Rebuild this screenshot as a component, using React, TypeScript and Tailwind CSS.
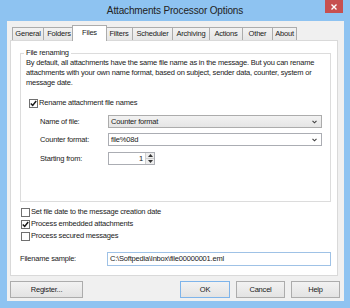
import type { ReactNode } from 'react';

const font = "font-['Liberation_Sans',Arial,sans-serif]";

const tabs = [
  { label: 'General', w: 'w-[31px]' },
  { label: 'Folders', w: 'w-[31px]' },
  { label: 'Files', w: 'w-[35px]', active: true },
  { label: 'Filters', w: 'w-[27px]' },
  { label: 'Scheduler', w: 'w-[40px]' },
  { label: 'Archiving', w: 'w-[37px]' },
  { label: 'Actions', w: 'w-[33px]' },
  { label: 'Other', w: 'w-[30px]' },
  { label: 'About', w: 'w-[25px]' },
];

function Check({ checked }: { checked?: boolean }) {
  return (
    <span className="flex h-[9px] w-[9px] shrink-0 items-center justify-center border border-[#707070] bg-white">
      {checked && (
        <svg width="7" height="7" viewBox="0 0 7 7">
          <path d="M0.8 3.4 L2.7 5.4 L6.2 1" stroke="#1a1a1a" strokeWidth="1.5" fill="none" />
        </svg>
      )}
    </span>
  );
}

function Chevron() {
  return (
    <svg width="5" height="4" viewBox="0 0 5 4" className="shrink-0">
      <path d="M0.5 0.8 L2.5 2.8 L4.5 0.8" stroke="#404040" strokeWidth="1.1" fill="none" />
    </svg>
  );
}

function CheckRow({ checked, children }: { checked?: boolean; children: ReactNode }) {
  return (
    <div className="flex h-[12px] items-center gap-[1px]">
      <Check checked={checked} />
      <span className="whitespace-nowrap">{children}</span>
    </div>
  );
}

function Button({ children, primary, w }: { children: ReactNode; primary?: boolean; w: string }) {
  return (
    <div
      className={`flex h-[17px] items-center justify-center border bg-gradient-to-b from-[#f2f2f2] to-[#e3e3e3] ${w} ${
        primary ? 'border-[#7eb4ea]' : 'border-[#acacac]'
      }`}
    >
      {children}
    </div>
  );
}

export default function App() {
  return (
    <div
      className={`flex h-[308px] w-[350px] flex-col bg-[#8ec3f1] text-[7.5px] leading-[10px] tracking-[-0.2px] text-[#1a1a1a] ${font}`}
    >
      {/* title bar */}
      <div className="relative flex h-[21px] shrink-0 items-center justify-center">
        <span className="text-[10px] tracking-[-0.15px] text-[#222]">Attachments Processor Options</span>
        <div className="absolute right-[7px] top-0 flex h-[13px] w-[18px] items-center justify-center bg-[#c75050]">
          <svg width="6" height="6" viewBox="0 0 6 6">
            <path d="M0.5 0.5 L5.5 5.5 M5.5 0.5 L0.5 5.5" stroke="#fff" strokeWidth="1.4" />
          </svg>
        </div>
      </div>

      {/* client area */}
      <div className="ml-[7px] flex h-[280px] w-[337px] flex-col bg-[#f0f0f0] pt-[4px]">
        <div className="ml-[3px] flex h-[15px] items-end pl-[2px]">
          {tabs.map((t) =>
            t.active ? (
              <div
                key={t.label}
                className={`relative z-10 -mx-[2px] -mb-px flex h-[16px] items-start justify-center border border-b-0 border-[#acacac] bg-white pt-[2px] ${t.w}`}
              >
                {t.label}
              </div>
            ) : (
              <div
                key={t.label}
                className={`flex h-[13px] items-center justify-center border border-r-0 border-b-0 border-[#acacac] bg-gradient-to-b from-[#f2f2f2] to-[#e6e6e6] last:border-r ${t.w}`}
              >
                {t.label}
              </div>
            )
          )}
        </div>

        <div className="ml-[3px] flex h-[236px] w-[328px] flex-col border border-[#d9d9d9] bg-white pt-[12px]">
          {/* group box */}
          <div className="relative ml-[9px] h-[149px] w-[311px] border border-[#dcdcdc] pt-[4px]">
            <span className="absolute -top-[6px] left-[3px] bg-white px-[2px]">File renaming</span>
            <div className="whitespace-nowrap pl-[5px]">
              By default, all attachments have the same file name as in the message. But you can rename
              <br />
              attachments with your own name format, based on subject, sender data, counter, system or
              <br />
              message date.
            </div>
            <div className="mt-[9px] pl-[8px]">
              <CheckRow checked>Rename attachment file names</CheckRow>
            </div>
            <div className="mt-[6px] flex items-center pl-[19px]">
              <span className="w-[68px]">Name of file:</span>
              <div className="flex h-[13px] w-[214px] items-center justify-between border border-[#acacac] bg-gradient-to-b from-[#f2f2f2] to-[#e5e5e5] pl-[2px] pr-[4px]">
                <span>Counter format</span>
                <Chevron />
              </div>
            </div>
            <div className="mt-[5px] flex items-center pl-[19px]">
              <span className="w-[68px]">Counter format:</span>
              <div className="flex h-[13px] w-[214px] items-center justify-between border border-[#abadb3] bg-white pl-[2px] pr-[4px]">
                <span>file%08d</span>
                <Chevron />
              </div>
            </div>
            <div className="mt-[6px] flex items-center pl-[19px]">
              <span className="w-[68px]">Starting from:</span>
              <div className="flex h-[13px] w-[47px] items-center border border-[#abadb3] bg-white">
                <span className="flex-1 pr-[2px] text-right">1</span>
                <div className="flex h-full w-[9px] flex-col border-l border-[#cfcfcf]">
                  <div className="flex flex-1 items-center justify-center bg-[#eeeeee]">
                    <svg width="5" height="3" viewBox="0 0 5 3">
                      <path d="M0 3 L2.5 0 L5 3 Z" fill="#333" />
                    </svg>
                  </div>
                  <div className="flex flex-1 items-center justify-center border-t border-[#cfcfcf] bg-[#eeeeee]">
                    <svg width="5" height="3" viewBox="0 0 5 3">
                      <path d="M0 0 L2.5 3 L5 0 Z" fill="#333" />
                    </svg>
                  </div>
                </div>
              </div>
            </div>
          </div>

          <div className="ml-[10px] mt-[4px] flex flex-col">
            <CheckRow>Set file date to the message creation date</CheckRow>
            <CheckRow checked>Process embedded attachments</CheckRow>
            <CheckRow>Process secured messages</CheckRow>
          </div>

          <div className="ml-[9px] mt-[10px] flex items-center">
            <span className="w-[87px]">Filename sample:</span>
            <div className="flex h-[14px] w-[224px] items-center border border-[#9fc2e6] bg-white pl-[2px]">
              C:\Softpedia\Inbox\file00000001.eml
            </div>
          </div>
        </div>

        <div className="mt-[5px] flex pl-[3px] pr-[4px]">
          <Button w="w-[73px]">Register...</Button>
          <div className="ml-auto flex gap-[6px]">
            <Button w="w-[50px]" primary>
              OK
            </Button>
            <Button w="w-[49px]">Cancel</Button>
            <Button w="w-[49px]">Help</Button>
          </div>
        </div>
      </div>
    </div>
  );
}
